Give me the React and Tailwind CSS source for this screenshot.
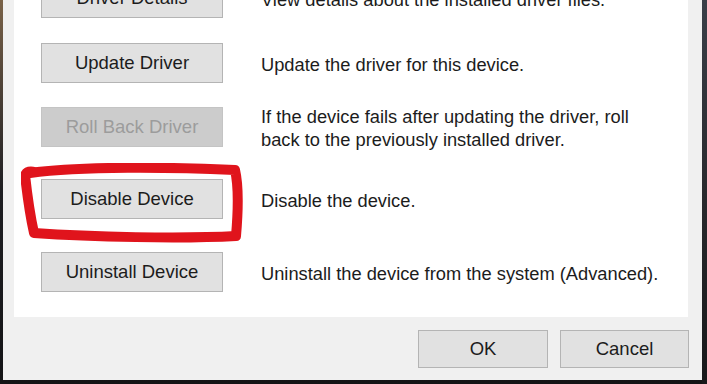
const rows = [
  { label: "Driver Details", desc: ["View details about the installed driver files."], mt: "-mt-[22px]" },
  { label: "Update Driver", desc: ["Update the driver for this device."], mt: "mt-[25px]" },
  {
    label: "Roll Back Driver",
    desc: ["If the device fails after updating the driver, roll", "back to the previously installed driver."],
    mt: "mt-[24px]",
    disabled: true,
  },
  { label: "Disable Device", desc: ["Disable the device."], mt: "mt-[32px]", circled: true },
  { label: "Uninstall Device", desc: ["Uninstall the device from the system (Advanced)."], mt: "mt-[33px]" },
];

function RedCircle() {
  // hand-drawn marker loop around the Disable Device button
  return (
    <svg className="absolute -left-[20px] -top-[16px] pointer-events-none" width="226" height="82" viewBox="0 0 226 82">
      <path
        d="M9 10 C 60 3, 150 4, 214 7 C 218 24, 217 50, 215 73 C 160 76, 70 74, 13 70 C 9 52, 6 30, 4 12 C 6 8, 10 8, 14 9"
        fill="none"
        stroke="#e0141c"
        strokeWidth="10"
        strokeLinecap="round"
        strokeLinejoin="round"
      />
    </svg>
  );
}

function Row({ label, desc, mt, disabled, circled }) {
  return (
    <div className={`flex items-center h-[40px] ${mt}`}>
      <div className="relative">
        <button
          className={`w-[182px] h-[40px] border text-[18.5px] ${
            disabled
              ? "bg-[#cccccc] border-[#c4c4c4] text-[#9c9c9c]"
              : "bg-[#e1e1e1] border-[#b4b4b4] text-[#1c1c1c]"
          }`}
        >
          {label}
        </button>
        {circled && <RedCircle />}
      </div>
      <div className="ml-[38px] text-[18.3px] leading-[23px] text-[#1c1c1c] pt-[2px]">
        {desc.map((d) => (
          <div key={d}>{d}</div>
        ))}
      </div>
    </div>
  );
}

export default function App() {
  return (
    <div
      className="w-[707px] h-[384px] overflow-hidden flex bg-gradient-to-b from-[#7a6248] via-[#1e1e22] to-[#141416]"
      style={{ fontFamily: '"Liberation Sans", Arial, sans-serif' }}
    >
      <div className="w-[3px]" />
      <div className="w-[699px] h-[380px] bg-[#f0f0f0] flex flex-col">
        <div className="mx-[11px] mr-[14px] h-[317px] bg-white overflow-hidden pl-[27px]">
          {rows.map((r) => (
            <Row key={r.label} {...r} />
          ))}
        </div>
        {/* footer */}
        <div className="flex justify-end gap-[12px] pr-[13px] mt-[13px]">
          <button className="w-[130px] h-[38px] bg-[#e1e1e1] border border-[#b4b4b4] text-[18.5px] text-[#1c1c1c]">
            OK
          </button>
          <button className="w-[129px] h-[38px] bg-[#e1e1e1] border border-[#b4b4b4] text-[18.5px] text-[#1c1c1c]">
            Cancel
          </button>
        </div>
      </div>
      <div className="flex-1 bg-gradient-to-b from-[#3a3f48] via-[#2a2a2e] to-[#18181a]" />
    </div>
  );
}
